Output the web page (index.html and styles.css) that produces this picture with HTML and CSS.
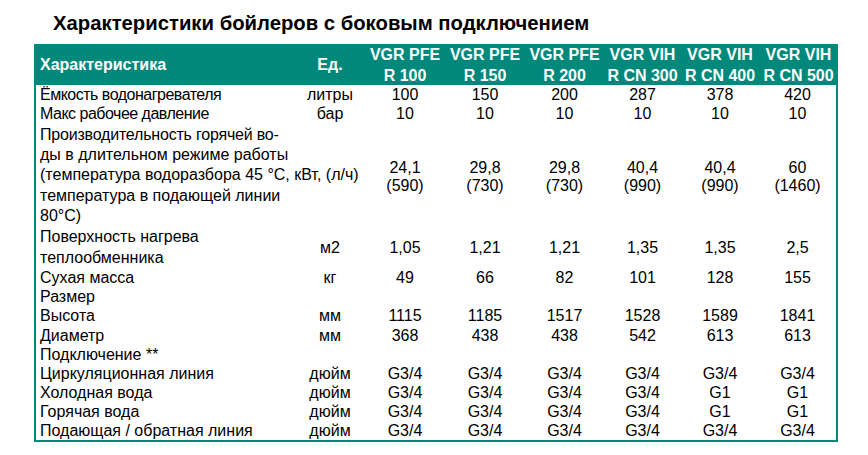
FILE: index.html
```html
<!DOCTYPE html>
<html lang="ru">
<head>
<meta charset="utf-8">
<title>Характеристики бойлеров</title>
<link rel="stylesheet" href="styles.css">
</head>
<body>
<div class="page">
  <h1 class="title">Характеристики бойлеров с боковым подключением</h1>
  <div class="sheet">
    <div class="row head">
      <div class="c desc">Характеристика</div>
      <div class="c unit">Ед.</div>
      <div class="c val">VGR PFE<br>R 100</div>
      <div class="c val">VGR PFE<br>R 150</div>
      <div class="c val">VGR PFE<br>R 200</div>
      <div class="c val">VGR VIH<br>R CN 300</div>
      <div class="c val">VGR VIH<br>R CN 400</div>
      <div class="c val">VGR VIH<br>R CN 500</div>
    </div>
    <div class="body">
      <div class="row first">
        <div class="c desc tight">Ёмкость водонагревателя</div>
        <div class="c unit">литры</div>
        <div class="c val">100</div><div class="c val">150</div><div class="c val">200</div>
        <div class="c val">287</div><div class="c val">378</div><div class="c val">420</div>
      </div>
      <div class="row second">
        <div class="c desc tight">Макс рабочее давление</div>
        <div class="c unit">бар</div>
        <div class="c val">10</div><div class="c val">10</div><div class="c val">10</div>
        <div class="c val">10</div><div class="c val">10</div><div class="c val">10</div>
      </div>
      <div class="row tall">
        <div class="c desc"><span class="snug">Производительность горячей во-</span><br>ды в длительном режиме работы<br>(температура водоразбора 45 °С, кВт, (л/ч)<br>температура в подающей линии<br>80°С)</div>
        <div class="c unit"></div>
        <div class="c val">24,1<br>(590)</div><div class="c val">29,8<br>(730)</div><div class="c val">29,8<br>(730)</div>
        <div class="c val">40,4<br>(990)</div><div class="c val">40,4<br>(990)</div><div class="c val">60<br>(1460)</div>
      </div>
      <div class="row pair">
        <div class="c desc">Поверхность нагрева<br>теплообменника</div>
        <div class="c unit">м2</div>
        <div class="c val">1,05</div><div class="c val">1,21</div><div class="c val">1,21</div>
        <div class="c val">1,35</div><div class="c val">1,35</div><div class="c val">2,5</div>
      </div>
      <div class="row">
        <div class="c desc">Сухая масса</div>
        <div class="c unit">кг</div>
        <div class="c val">49</div><div class="c val">66</div><div class="c val">82</div>
        <div class="c val">101</div><div class="c val">128</div><div class="c val">155</div>
      </div>
      <div class="row">
        <div class="c desc">Размер</div>
      </div>
      <div class="row">
        <div class="c desc">Высота</div>
        <div class="c unit">мм</div>
        <div class="c val">1115</div><div class="c val">1185</div><div class="c val">1517</div>
        <div class="c val">1528</div><div class="c val">1589</div><div class="c val">1841</div>
      </div>
      <div class="row">
        <div class="c desc">Диаметр</div>
        <div class="c unit">мм</div>
        <div class="c val">368</div><div class="c val">438</div><div class="c val">438</div>
        <div class="c val">542</div><div class="c val">613</div><div class="c val">613</div>
      </div>
      <div class="row">
        <div class="c desc">Подключение **</div>
      </div>
      <div class="row">
        <div class="c desc">Циркуляционная линия</div>
        <div class="c unit">дюйм</div>
        <div class="c val">G3/4</div><div class="c val">G3/4</div><div class="c val">G3/4</div>
        <div class="c val">G3/4</div><div class="c val">G3/4</div><div class="c val">G3/4</div>
      </div>
      <div class="row">
        <div class="c desc">Холодная вода</div>
        <div class="c unit">дюйм</div>
        <div class="c val">G3/4</div><div class="c val">G3/4</div><div class="c val">G3/4</div>
        <div class="c val">G3/4</div><div class="c val">G1</div><div class="c val">G1</div>
      </div>
      <div class="row">
        <div class="c desc">Горячая вода</div>
        <div class="c unit">дюйм</div>
        <div class="c val">G3/4</div><div class="c val">G3/4</div><div class="c val">G3/4</div>
        <div class="c val">G3/4</div><div class="c val">G1</div><div class="c val">G1</div>
      </div>
      <div class="row">
        <div class="c desc">Подающая / обратная линия</div>
        <div class="c unit">дюйм</div>
        <div class="c val">G3/4</div><div class="c val">G3/4</div><div class="c val">G3/4</div>
        <div class="c val">G3/4</div><div class="c val">G3/4</div><div class="c val">G3/4</div>
      </div>
    </div>
  </div>
</div>
</body>
</html>
```

FILE: styles.css
```css
html, body {
  margin: 0;
  padding: 0;
  background: #ffffff;
}

.page {
  width: 868px;
  height: 455px;
  padding: 10px 0 0 34px;
  box-sizing: border-box;
  font-family: "Liberation Sans", Arial, sans-serif;
  color: #000000;
}

.title {
  margin: 0 0 0 19px;
  font-size: 20.3px;
  line-height: 26px;
  font-weight: bold;
  height: 34px;
}

.sheet {
  width: 804px;
}

.row {
  display: grid;
  grid-template-columns: 259px 70px 80px 80px 79px 77px 78px 77px;
  font-size: 16px;
  line-height: 19.1px;
}

.row.first {
  line-height: 19.3px;
}

.row.second {
  line-height: 20.5px;
}

.row.tall {
  line-height: 20.3px;
}

.row.pair {
  line-height: 21px;
}

.head {
  grid-template-columns: 261px 70px 80px 80px 79px 77px 78px 79px;
  background: #00897a;
  color: #ffffff;
  font-weight: bold;
  font-size: 16px;
  line-height: 20.5px;
  height: 41px;
  padding-top: 1px;
  box-sizing: border-box;
}

.head .desc {
  padding-left: 6px;
  align-self: center;
}

.head .unit {
  align-self: center;
}

.body {
  border: 2px solid #00897a;
  border-top: 0;
}

.c {
  white-space: nowrap;
}

.desc {
  padding-left: 4px;
  overflow: visible;
}

.tight {
  letter-spacing: -0.5px;
}

.snug {
  letter-spacing: -0.2px;
}

.unit,
.val {
  text-align: center;
  align-self: center;
}

.tall .val {
  line-height: 18.5px;
  padding-top: 3px;
}
```
